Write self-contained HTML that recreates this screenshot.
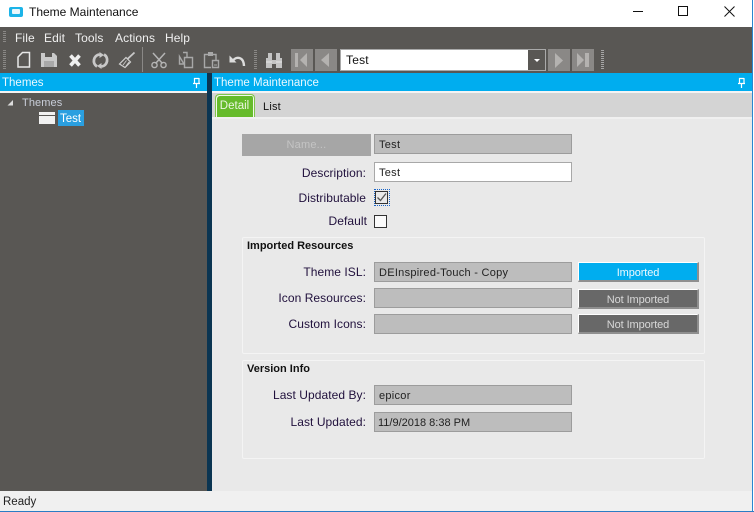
<!DOCTYPE html>
<html>
<head>
<meta charset="utf-8">
<style>
html,body{margin:0;padding:0;width:754px;height:512px;overflow:hidden;background:#fff}
body{font-family:"Liberation Sans",sans-serif;font-size:12px;color:#1a1030;position:relative}
.a{position:absolute;white-space:nowrap}
.m{position:absolute;top:31px;font-size:12px;line-height:15px;color:#f0f0f0;letter-spacing:.1px}
.lbl{position:absolute;text-align:right;color:#20103c;line-height:14px;white-space:nowrap;letter-spacing:.06px}
.inp{position:absolute;box-sizing:border-box;height:20px;background:#bdbdbd;border:1px solid #9c9c9c;padding-left:4px;line-height:20px;font-size:11px;color:#222;letter-spacing:.28px;white-space:nowrap}
.btn{position:absolute;left:578px;width:121px;height:20px;box-sizing:border-box;border-top:1px solid #fff;border-left:1px solid #fff;border-right:2px solid #8f8f8f;border-bottom:2px solid #8f8f8f;background:#686868;color:#d8d8d8;text-align:center;line-height:20px;font-size:11px;letter-spacing:-.1px}
.grp{position:absolute;box-sizing:border-box;border:1px solid #f4f4f4;border-radius:2px}
svg{position:absolute;overflow:visible}
.navb{position:absolute;top:49px;width:22px;height:22px;background:#8a8886}
</style>
</head>
<body>
<!-- title bar -->
<div class="a" style="left:9px;top:7px;width:14px;height:10px;background:#1cb4e8;border-radius:2px"></div>
<div class="a" style="left:12px;top:9px;width:8px;height:5px;background:#e9f7fc;border-radius:1px"></div>
<div class="a" style="left:29px;top:4px;font-size:12px;line-height:16px;color:#111">Theme Maintenance</div>
<svg style="left:0;top:0" width="754" height="27" fill="none" stroke="#111" stroke-width="1">
<path d="M633 11.5H643"/><rect x="678.5" y="6.5" width="9" height="9"/><path d="M724.5 6.5L734.5 16.5M734.5 6.5L724.5 16.5"/>
</svg>

<!-- dark chrome -->
<div class="a" style="left:0;top:27px;width:752px;height:46px;background:#595754"></div>
<div class="m" style="left:15px">File</div>
<div class="m" style="left:44px">Edit</div>
<div class="m" style="left:75px">Tools</div>
<div class="m" style="left:115px">Actions</div>
<div class="m" style="left:165px">Help</div>
<div class="a" style="left:3px;top:31px;width:3px;height:11px;background:repeating-linear-gradient(#8a8886 0 1px,#595754 1px 2px)"></div>
<div class="a" style="left:3px;top:50px;width:3px;height:20px;background:repeating-linear-gradient(#8a8886 0 1px,#595754 1px 2px)"></div>
<div class="a" style="left:254px;top:50px;width:3px;height:20px;background:repeating-linear-gradient(#8a8886 0 1px,#595754 1px 2px)"></div>
<div class="a" style="left:601px;top:50px;width:3px;height:20px;background:repeating-linear-gradient(#a5a5a5 0 1px,#595754 1px 2px)"></div>
<div class="a" style="left:142px;top:47px;width:1px;height:25px;background:#8a8886"></div>

<!-- toolbar icons -->
<svg style="left:0;top:0" width="300" height="73" fill="none">
<path d="M22.500 52.500H29.500V67H18V57Z" stroke="#e8e8e8" stroke-width="1.500"/>
<path d="M41 53H54L57 56V67H41Z" fill="#c9c9c9"/><rect x="45" y="53" width="7" height="4" fill="#595754"/><rect x="44" y="61" width="10" height="6" fill="#a8a8a8"/>
<path d="M70.500 55.500L79.500 65.500M79.500 55.500L70.500 65.500" stroke="#efefef" stroke-width="3.600"/>
<path d="M97 66.500A6.500 6.500 0 0 1 99.500 54.500M104 54.500A6.500 6.500 0 0 1 101.500 66.500" stroke="#c8c8c8" stroke-width="2.800"/>
<path d="M99.500 52L104 55L99.500 58ZM101.500 63L97 66L101.500 69Z" fill="#c8c8c8"/>
<path d="M134.500 52.500L127.500 59" stroke="#c8c8c8" stroke-width="1.800"/><path d="M126 57.500L130.500 62L125 67.500L119.500 64Z" stroke="#d0d0d0" stroke-width="1.200"/><path d="M123 65L126.500 60.500M126 66L129 62" stroke="#d0d0d0" stroke-width=".8"/>
<path d="M153 53L162.500 63.500M165 53L155.500 63.500" stroke="#b5b5b5" stroke-width="1.500"/><circle cx="154.500" cy="65" r="2.600" stroke="#b5b5b5" stroke-width="1.400"/><circle cx="163.500" cy="65" r="2.600" stroke="#b5b5b5" stroke-width="1.400"/>
<path d="M183 52.500H187V57M184 64H179.500V56.500Z" stroke="#a8a8a8" stroke-width="1.400"/><path d="M184.500 57.500H192.500V67.500H184.500Z" stroke="#a8a8a8" stroke-width="1.400"/>
<path d="M211 67.500H204.500V54.500H216V60" stroke="#a8a8a8" stroke-width="1.400"/><rect x="208" y="52" width="5" height="4" fill="#a8a8a8"/><path d="M212.500 60.500H218.500V67.500H212.500Z" stroke="#a8a8a8" stroke-width="1.400"/><path d="M214 65H217" stroke="#a8a8a8"/>
<path d="M233 60.500C236 56.500 243.500 56 244 66" stroke="#dcdcdc" stroke-width="2.400"/><path d="M229.500 55.500V62.500H236.500Z" fill="#dcdcdc"/>
<path d="M268 53H272V58H268ZM276 53H280V58H276ZM266 58H272V68H266ZM276 58H282V68H276ZM272 60H276V64H272Z" fill="#c4c4c4"/><path d="M266 62H272M276 62H282" stroke="#e6e6e6"/>
</svg>

<!-- nav -->
<div class="navb" style="left:291px"></div>
<div class="navb" style="left:315px"></div>
<div class="navb" style="left:548px"></div>
<div class="navb" style="left:572px"></div>
<svg style="left:0;top:0" width="754" height="73" fill="#b4b2b0">
<rect x="295" y="53" width="3" height="14"/><path d="M300 60L307 53V67Z"/>
<path d="M321 60L329 53V67Z"/>
<path d="M555 53V68L563 60.500Z"/>
<path d="M577 53L584 60L577 67Z"/><rect x="585" y="53" width="4" height="14"/>
</svg>
<div class="a" style="left:340px;top:49px;width:206px;height:22px;box-sizing:border-box;background:#fff;border:1px solid #a9a9a9;padding-left:5px;line-height:21px;font-size:12px;color:#111;letter-spacing:.2px">Test</div>
<div class="a" style="left:528px;top:50px;width:17px;height:20px;background:#595754"></div>
<div class="a" style="left:534px;top:59px;width:0;height:0;border-left:3px solid transparent;border-right:3px solid transparent;border-top:3px solid #fff"></div>

<!-- blue headers -->
<div class="a" style="left:0;top:73px;width:752px;height:18px;background:#00adef"></div>
<div class="a" style="left:0;top:91px;width:752px;height:2px;background:#f4f4f4"></div>
<div class="a" style="left:2px;top:76px;font-size:11.500px;line-height:14px;color:#eaf8ff">Themes</div>
<div class="a" style="left:214px;top:76px;font-size:11.500px;line-height:14px;color:#eaf8ff">Theme Maintenance</div>
<svg style="left:0;top:0" width="754" height="93" fill="none" stroke="#fff">
<path d="M194.500 78V83M199 78V83M193 83.500H200M196.500 84V88M194 78.500H199" stroke-width="1.200"/>
<path d="M739.500 78V83M744 78V83M738 83.500H745M741.500 84V88M739 78.500H744" stroke-width="1.200"/>
</svg>

<!-- left panel -->
<div class="a" style="left:0;top:93px;width:207px;height:398px;background:#595754"></div>
<div class="a" style="left:207px;top:73px;width:5px;height:418px;background:#0b3552"></div>
<div class="a" style="left:22px;top:96px;font-size:11px;line-height:14px;color:#c8cdd8;letter-spacing:.1px">Themes</div>
<svg style="left:0;top:0" width="207" height="130"><path d="M13 100V105.500H7.500Z" fill="#dcdcdc"/></svg>
<div class="a" style="left:39px;top:112px;width:16px;height:12px;background:#f1f1f1"></div>
<div class="a" style="left:39px;top:115px;width:16px;height:1px;background:#595754"></div>
<div class="a" style="left:58px;top:110px;width:26px;height:16px;background:#2a9fe0;color:#fff;font-size:11.500px;line-height:18px;padding-left:2px;box-sizing:border-box">Test</div>

<!-- right panel -->
<div class="a" style="left:212px;top:93px;width:540px;height:24px;background:#d4d4d4"></div>
<div class="a" style="left:212px;top:117px;width:540px;height:2px;background:#f0f0f0"></div>
<div class="a" style="left:212px;top:119px;width:540px;height:372px;background:#e9e9e9"></div>
<div class="a" style="left:215px;top:94px;width:40px;height:23px;box-sizing:border-box;background:#66bb2b;border:1px solid #7fc64b;border-bottom:0;border-radius:4px 4px 0 0;box-shadow:inset 1px 1px 0 #f2f8ea,inset -1px 0 0 #f2f8ea;color:#ecf6e2;text-align:center;font-size:11.500px;line-height:23px;padding-right:1px">Detail</div>
<div class="a" style="left:263px;top:100px;font-size:11px;line-height:14px;color:#111;letter-spacing:.2px">List</div>
<div class="a" style="left:752px;top:0;width:1px;height:512px;background:#2a86d0"></div>
<div class="a" style="left:753px;top:0;width:1px;height:512px;background:#fff"></div>

<!-- form -->
<div class="a" style="left:242px;top:134px;width:129px;height:22px;background:#a6a6a6;color:#c4c4c4;text-align:center;font-size:11px;line-height:23px;letter-spacing:.2px">Name...</div>
<div class="inp" style="left:374px;top:134px;width:198px;background:#bdbdbd">Test</div>
<div class="lbl" style="left:260px;width:106px;top:166px">Description:</div>
<div class="inp" style="left:374px;top:162px;width:198px;background:#fff;border-color:#a8a8a8">Test</div>
<div class="lbl" style="left:260px;width:106px;top:191px">Distributable</div>
<div class="a" style="left:374px;top:189px;width:16px;height:17px;box-sizing:border-box;border:1px dotted #1864c8"></div>
<div class="a" style="left:375px;top:191px;width:13px;height:13px;box-sizing:border-box;border:1px solid #333"></div>
<svg style="left:0;top:0" width="400" height="210" fill="none"><path d="M377.500 197.500L380.500 200.500L386 193.500" stroke="#555" stroke-width="1.300"/></svg>
<div class="lbl" style="left:260px;width:107px;top:214px">Default</div>
<div class="a" style="left:374px;top:215px;width:13px;height:13px;box-sizing:border-box;border:1px solid #333;background:#fbfbfb"></div>

<div class="grp" style="left:242px;top:237px;width:463px;height:117px"></div>
<div class="a" style="left:247px;top:239px;font-size:11px;font-weight:bold;line-height:14px;color:#111">Imported Resources</div>
<div class="lbl" style="left:260px;width:106px;top:265px">Theme ISL:</div>
<div class="inp" style="left:374px;top:262px;width:198px">DEInspired-Touch - Copy</div>
<div class="btn" style="top:262px;background:#00adef;color:#eef9ff">Imported</div>
<div class="lbl" style="left:260px;width:106px;top:291px">Icon Resources:</div>
<div class="inp" style="left:374px;top:288px;width:198px"></div>
<div class="btn" style="top:289px">Not Imported</div>
<div class="lbl" style="left:260px;width:106px;top:317px">Custom Icons:</div>
<div class="inp" style="left:374px;top:314px;width:198px"></div>
<div class="btn" style="top:314px">Not Imported</div>

<div class="grp" style="left:242px;top:360px;width:463px;height:99px"></div>
<div class="a" style="left:247px;top:362px;font-size:11px;font-weight:bold;line-height:14px;color:#111">Version Info</div>
<div class="lbl" style="left:260px;width:106px;top:388px">Last Updated By:</div>
<div class="inp" style="left:374px;top:385px;width:198px">epicor</div>
<div class="lbl" style="left:260px;width:106px;top:415px">Last Updated:</div>
<div class="inp" style="left:374px;top:412px;width:198px;padding-left:3px;letter-spacing:0">11/9/2018 8:38 PM</div>

<!-- status -->
<div class="a" style="left:0;top:491px;width:752px;height:20px;background:#f0f0f0"></div>
<div class="a" style="left:3px;top:495px;font-size:11.500px;line-height:14px;color:#222">Ready</div>
<div class="a" style="left:0;top:511px;width:754px;height:1px;background:#2a7cc4"></div>
</body>
</html>
